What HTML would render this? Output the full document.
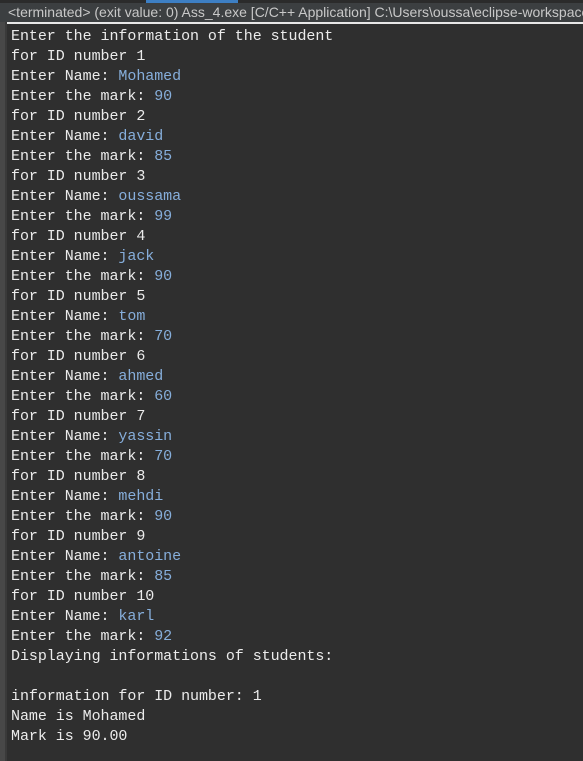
<!DOCTYPE html>
<html><head><style>
html,body{margin:0;padding:0;width:583px;height:761px;overflow:hidden;background:#2f2f2f;}
.top{position:absolute;left:0;top:0;width:583px;height:3px;background:#2b2b2b;}
.tab{position:absolute;left:146px;top:0;width:92px;height:3px;background:#3d7fc4;}
.hdr{position:absolute;left:0;top:3px;width:583px;height:19px;background:#3c3f41;color:#c8c8c8;font:14px "Liberation Sans",sans-serif;line-height:19px;padding-left:8px;white-space:nowrap;overflow:hidden;box-sizing:border-box;letter-spacing:0;}
.sep{position:absolute;left:7px;top:22px;width:576px;height:2px;background:#e8e8e8;}
.gut{position:absolute;left:0;top:22px;width:5px;height:739px;background:#484848;}
.gut2{position:absolute;left:5px;top:22px;width:2px;height:739px;background:#3a3a3a;}
pre{position:absolute;left:11px;top:27px;margin:0;font:15px "Liberation Mono","DejaVu Sans Mono",monospace;line-height:20px;color:#ebebeb;letter-spacing:-0.05px;}
b{font-weight:normal;color:#86aedb;}
</style></head><body>
<div class="top"></div><div class="tab"></div>
<div class="hdr">&lt;terminated&gt; (exit value: 0) Ass_4.exe [C/C++ Application] C:\Users\oussa\eclipse-workspace</div>
<div class="sep"></div><div class="gut"></div><div class="gut2"></div>
<pre>Enter the information of the student
for ID number 1
Enter Name: <b>Mohamed</b>
Enter the mark: <b>90</b>
for ID number 2
Enter Name: <b>david</b>
Enter the mark: <b>85</b>
for ID number 3
Enter Name: <b>oussama</b>
Enter the mark: <b>99</b>
for ID number 4
Enter Name: <b>jack</b>
Enter the mark: <b>90</b>
for ID number 5
Enter Name: <b>tom</b>
Enter the mark: <b>70</b>
for ID number 6
Enter Name: <b>ahmed</b>
Enter the mark: <b>60</b>
for ID number 7
Enter Name: <b>yassin</b>
Enter the mark: <b>70</b>
for ID number 8
Enter Name: <b>mehdi</b>
Enter the mark: <b>90</b>
for ID number 9
Enter Name: <b>antoine</b>
Enter the mark: <b>85</b>
for ID number 10
Enter Name: <b>karl</b>
Enter the mark: <b>92</b>
Displaying informations of students:

information for ID number: 1
Name is Mohamed
Mark is 90.00</pre>
</body></html>
